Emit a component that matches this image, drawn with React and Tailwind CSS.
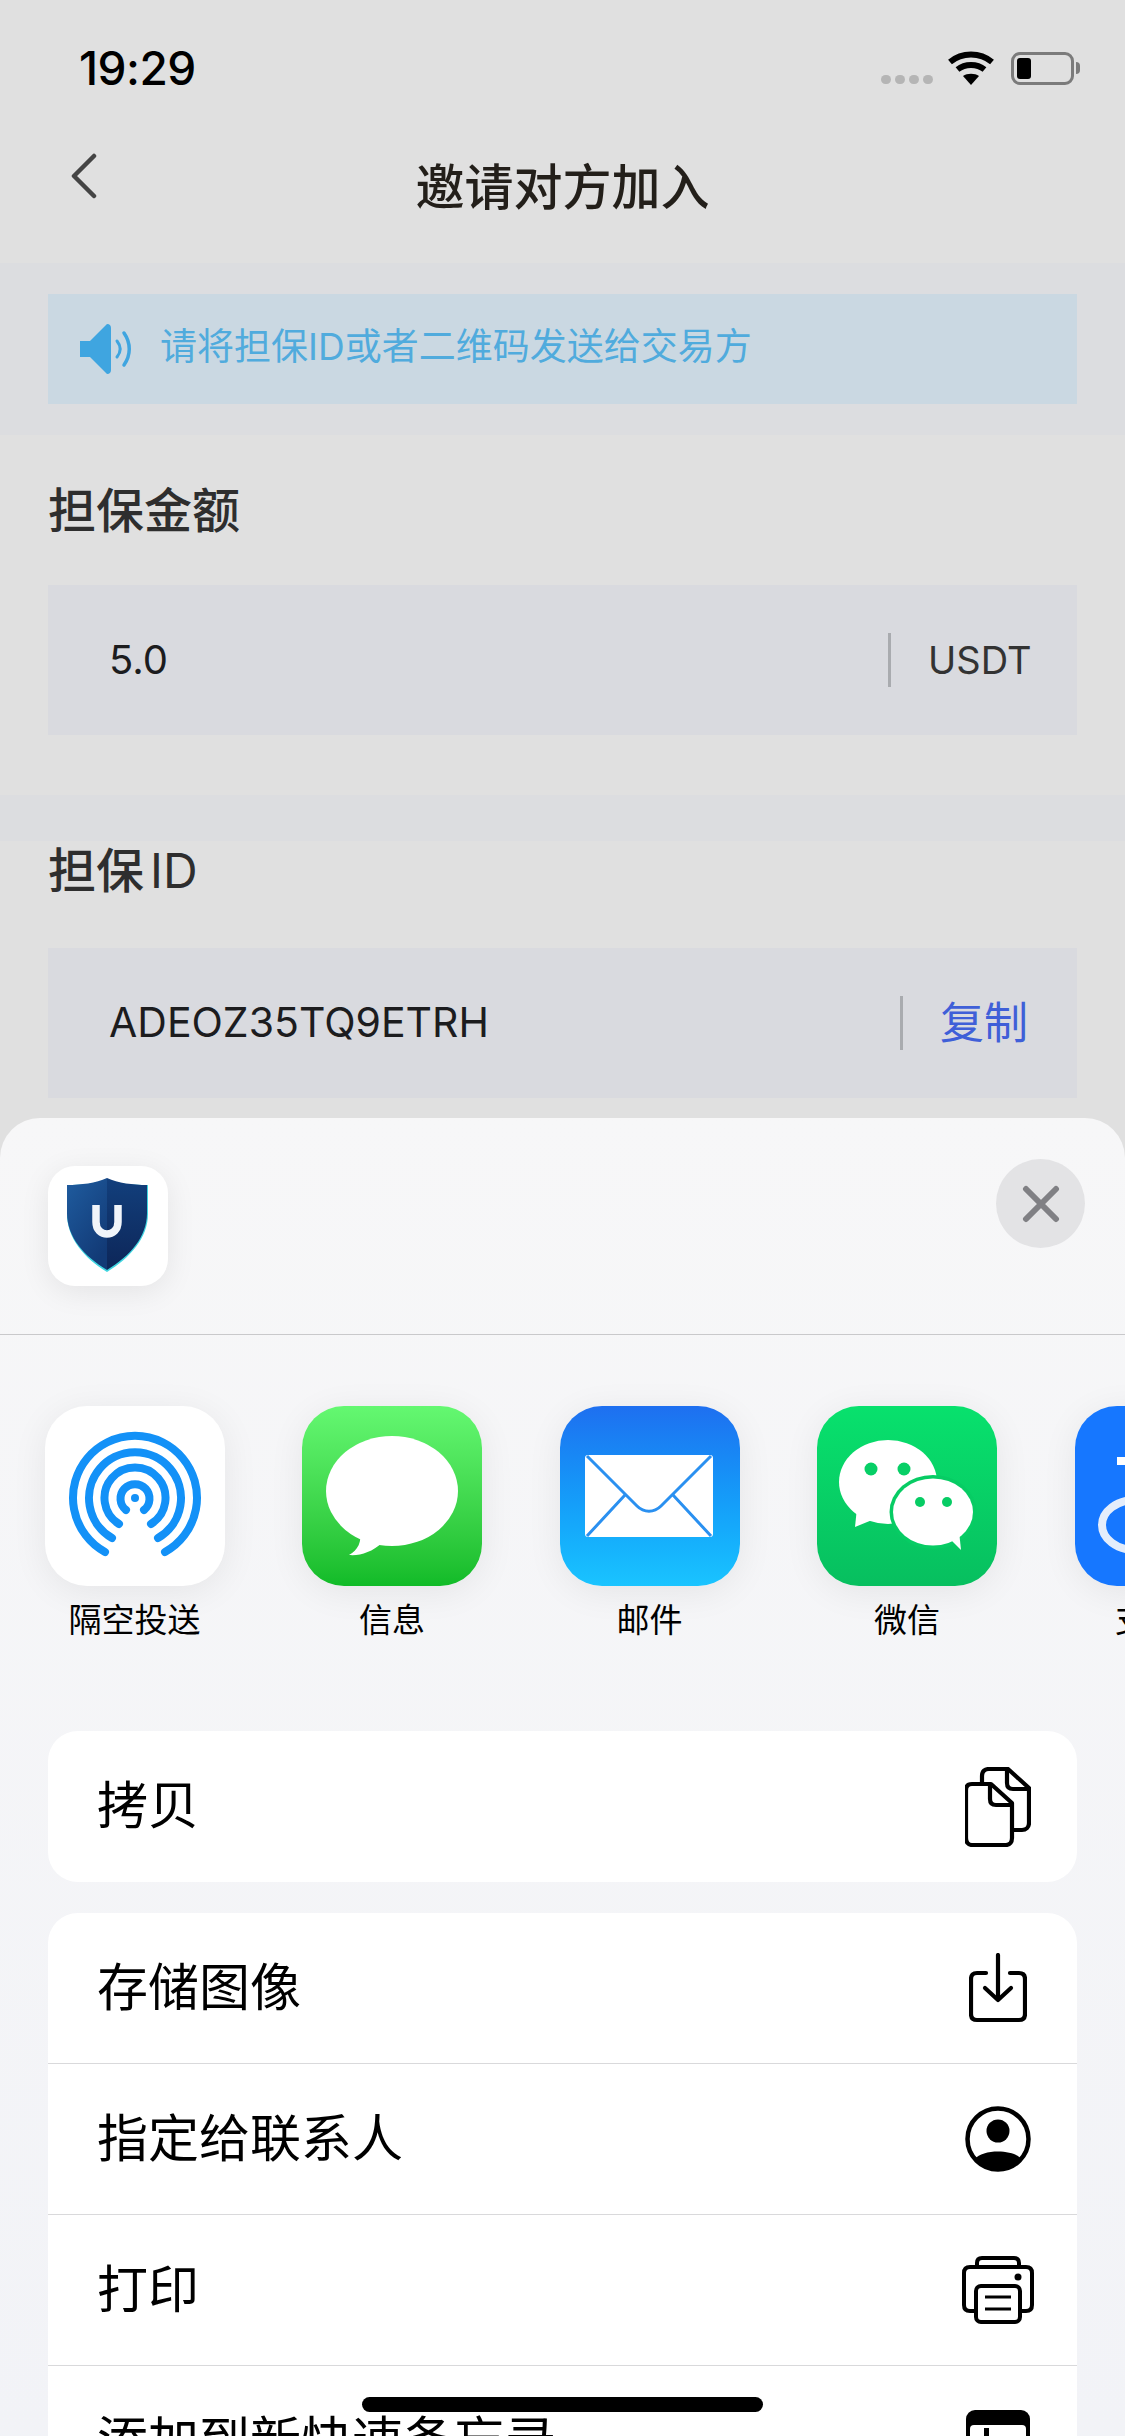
import React from 'react'

const WifiIcon = () => (
  <svg width="48" height="34" viewBox="0 0 48 34" fill="none" stroke="#000" strokeWidth="6">
    <path d="M3 11 C15 1 33 1 45 11" />
    <path d="M10.5 18.5 C18 12.5 30 12.5 37.5 18.5" />
    <path d="M24 34 L16 25 C20 22 28 22 32 25 Z" fill="#000" stroke="none" />
  </svg>
)

const BatteryIcon = () => (
  <div className="flex items-center gap-[2px]">
    <div className="w-[63px] h-[33px] rounded-[9px] border-[3px] border-[#7b7b7b] p-[3px]">
      <div className="w-[14px] h-full rounded-[3px] bg-black" />
    </div>
    <div className="w-[4px] h-[12px] rounded-r-full bg-[#7b7b7b]" />
  </div>
)

const SpeakerIcon = () => (
  <svg width="51" height="50" viewBox="0 0 51 50" fill="none">
    <path d="M0 17 H10 L27 0 C30 0 31 2 31 4 V46 C31 48 30 50 27 50 L10 33 H0 Z" fill="#3fa5e0" />
    <path d="M37 17 C41 22 41 28 37 33" stroke="#3fa5e0" strokeWidth="3" strokeLinecap="round" />
    <path d="M44 9 C51 19 51 31 44 41" stroke="#3fa5e0" strokeWidth="3.5" strokeLinecap="round" />
  </svg>
)

const ShieldLogo = () => (
  <svg width="120" height="120" viewBox="0 0 120 120">
    <defs>
      <linearGradient id="shieldLeft" x1="0" y1="0" x2="0.6" y2="1">
        <stop offset="0" stopColor="#1f5c9f" />
        <stop offset="1" stopColor="#123a76" />
      </linearGradient>
      <linearGradient id="shieldRight" x1="0" y1="0" x2="0" y2="1">
        <stop offset="0" stopColor="#123f7c" />
        <stop offset="1" stopColor="#0d2658" />
      </linearGradient>
    </defs>
    <path d="M59 13 C70 18 86 19 100 19 V48 C100 72 82 92 59 106 C36 92 19 72 19 48 V19 C33 19 48 18 59 13 Z" fill="#3fd5e0" />
    <path d="M59 12 C48 17 33 19 19 19 V47 C19 71 36 90 59 104 Z" fill="url(#shieldLeft)" />
    <path d="M59 12 C70 17 85 19 99 19 V47 C99 71 82 90 59 104 Z" fill="url(#shieldRight)" />
    <path d="M48 39 V56 C48 72 70 72 70 56 V39" fill="none" stroke="#f1f5fa" strokeWidth="7.5" />
  </svg>
)

const AirDropIcon = () => (
  <svg width="180" height="180" viewBox="0 0 180 180" fill="none" stroke="#1391f7" strokeWidth="8" strokeLinecap="round">
    <path d="M60 146 A62 62 0 1 1 120 146" />
    <path d="M67 132 A46 46 0 1 1 113 132" />
    <path d="M74 118 A30.5 30.5 0 1 1 106 118" />
    <path d="M81 104 A14.5 14.5 0 1 1 99 104" />
    <circle cx="90" cy="92" r="4" fill="#1391f7" stroke="none" />
  </svg>
)

const MessageIcon = () => (
  <svg width="180" height="180" viewBox="0 0 180 180">
    <ellipse cx="90" cy="85" rx="66" ry="55" fill="#fff" />
    <path d="M58 124 C60 136 56 144 47 149 C58 150 70 146 80 137 Z" fill="#fff" />
  </svg>
)

const MailIcon = () => (
  <svg width="180" height="180" viewBox="0 0 180 180" fill="none">
    <rect x="25" y="49" width="128" height="82" rx="3" fill="#fff" />
    <path d="M27 50 L77 100 C84 107 94 107 101 100 L151 50" stroke="#2a90f0" strokeWidth="3" />
    <path d="M27 130 L65 89 M151 130 L113 89" stroke="#2a90f0" strokeWidth="3" />
  </svg>
)

const WechatIcon = () => (
  <svg width="180" height="180" viewBox="0 0 180 180">
    <ellipse cx="71" cy="76" rx="49" ry="42" fill="#fff" />
    <path d="M40 102 L38 121 L60 112 Z" fill="#fff" />
    <circle cx="54" cy="63" r="6.5" fill="#07cf66" />
    <circle cx="87" cy="63" r="6.5" fill="#07cf66" />
    <ellipse cx="116" cy="106" rx="43.5" ry="37" fill="#07cc64" />
    <ellipse cx="116" cy="106" rx="40" ry="33.5" fill="#fff" />
    <path d="M130 130 L144 144 L142 125 Z" fill="#fff" />
    <circle cx="103" cy="96" r="5" fill="#07cc64" />
    <circle cx="130" cy="96" r="5" fill="#07cc64" />
  </svg>
)

const AlipayIcon = () => (
  <svg width="180" height="180" viewBox="0 0 180 180" fill="none">
    <rect x="42" y="51" width="130" height="8" fill="#fff" />
    <rect x="80" y="34" width="9" height="40" fill="#fff" />
    <ellipse cx="60" cy="119" rx="33" ry="25" stroke="#e4edfb" strokeWidth="8" />
  </svg>
)

const CopyIcon = () => (
  <svg width="66" height="80" viewBox="0 0 66 80" fill="none" stroke="#000" strokeWidth="4.2" strokeLinejoin="round">
    <path d="M17 15 V9 C17 4 20 2 24 2 H43 L64 21 V56 C64 60 61 63 57 63 H47" />
    <path d="M42 2 V16 C42 20 44 22 48 22 H64" />
    <path d="M7 17 H26 L47 36 V71 C47 75 45 78 41 78 H7 C3 78 1 75 1 71 V23 C1 19 3 17 7 17 Z" fill="#fff" />
    <path d="M25 17 V32 C25 36 27 38 31 38 H47" />
  </svg>
)

const SaveIcon = () => (
  <svg width="58" height="70" viewBox="0 0 58 70" fill="none" stroke="#000" strokeWidth="4.2" strokeLinecap="round" strokeLinejoin="round">
    <path d="M17 20 H8 C4 20 2 22 2 26 V61 C2 65 4 67 8 67 H50 C54 67 56 65 56 61 V26 C56 22 54 20 50 20 H41" />
    <path d="M29 2 V46" />
    <path d="M16 35 L29 47 L42 35" />
  </svg>
)

const ContactIcon = () => (
  <svg width="66" height="66" viewBox="0 0 66 66">
    <circle cx="33" cy="33" r="30.5" fill="none" stroke="#000" strokeWidth="4.5" />
    <circle cx="33" cy="25" r="11.5" fill="#000" />
    <path d="M10 53 C17 43 49 43 56 53 C50 61 42 65 33 65 C24 65 16 61 10 53 Z" fill="#000" />
  </svg>
)

const PrintIcon = () => (
  <svg width="72" height="68" viewBox="0 0 72 68" fill="none" stroke="#000" strokeWidth="4" strokeLinejoin="round">
    <path d="M15 11 V7 C15 3 17 2 20 2 H52 C55 2 57 3 57 7 V11" />
    <path d="M14 55 H8 C4 55 2 53 2 49 V17 C2 13 4 11 8 11 H64 C68 11 70 13 70 17 V49 C70 53 68 55 64 55 H58" />
    <rect x="14" y="30" width="44" height="36" rx="5" />
    <path d="M23 41 H49 M23 53 H49" strokeWidth="3" />
    <circle cx="56" cy="21" r="3.5" fill="#000" stroke="none" />
  </svg>
)

const QuickNoteIcon = () => (
  <svg width="64" height="64" viewBox="0 0 64 64">
    <rect x="0" y="0" width="64" height="64" rx="9" fill="#000" />
    <rect x="4" y="15" width="56" height="45" rx="4" fill="#fff" />
    <rect x="18" y="18" width="5" height="8" fill="#000" />
  </svg>
)

const apps = [
  { name: '隔空投送', bg: 'bg-white', icon: <AirDropIcon /> },
  { name: '信息', bg: 'bg-gradient-to-b from-[#64f871] to-[#10bb28]', icon: <MessageIcon /> },
  { name: '邮件', bg: 'bg-gradient-to-b from-[#1e6ff0] to-[#1ac4ff]', icon: <MailIcon /> },
  { name: '微信', bg: 'bg-gradient-to-b from-[#08e16d] to-[#07bf5f]', icon: <WechatIcon /> },
  { name: '支付宝', bg: 'bg-[#1677ff]', icon: <AlipayIcon /> },
]

const actions = [
  { label: '存储图像', icon: <SaveIcon /> },
  { label: '指定给联系人', icon: <ContactIcon /> },
  { label: '打印', icon: <PrintIcon /> },
  { label: '添加到新快速备忘录', icon: <QuickNoteIcon /> },
]

const ActionRow = ({ label, icon, divider }) => (
  <div className={`flex items-center h-[151px] pl-[49px] ${divider ? 'border-b border-[#d9d9db]' : ''}`}>
    <span className="flex-1 text-[51px] text-black">{label}</span>
    <div className="w-[100px] flex justify-center mr-[29px]">{icon}</div>
  </div>
)

const Field = ({ value, valueClass, children }) => (
  <div className="flex items-center h-[150px] mx-[48px] bg-[#d9dadf]">
    <span className={`flex-1 pl-[61px] text-[#1c1c1e] ${valueClass}`}>{value}</span>
    <div className="w-[3px] h-[54px] bg-[#a9abaf]" />
    {children}
  </div>
)

export default function App() {
  return (
    <div lang="zh-CN" className="relative w-[1125px] h-[2436px] overflow-hidden bg-[#e0e0e0] font-[Inter,'Noto_Sans_CJK_SC',sans-serif]">
      {/* status bar */}
      <div className="flex items-center justify-between h-[136px] pl-[79px] pr-[45px]">
        <span className="text-[46px] font-medium tracking-[-0.5px] text-black">19:29</span>
        <div className="flex items-center">
          <div className="flex gap-[4px] mt-[22px] mr-[14px]">
            <span className="w-[10px] h-[9px] rounded-full bg-[#b5b5b5]" />
            <span className="w-[10px] h-[9px] rounded-full bg-[#b5b5b5]" />
            <span className="w-[10px] h-[9px] rounded-full bg-[#b5b5b5]" />
            <span className="w-[10px] h-[9px] rounded-full bg-[#b5b5b5]" />
          </div>
          <WifiIcon />
          <div className="ml-[16px]"><BatteryIcon /></div>
        </div>
      </div>

      {/* nav */}
      <div className="relative flex justify-center h-[127px] pt-[22px]">
        <svg className="absolute left-[69px] top-[17px]" width="28" height="46" viewBox="0 0 28 46" fill="none">
          <path d="M25 3 L5 23 L25 43" stroke="#444" strokeWidth="4.5" strokeLinecap="round" strokeLinejoin="round" />
        </svg>
        <span className="text-[49px] leading-[60px] font-medium text-[#231f1a]">邀请对方加入</span>
      </div>

      {/* notice */}
      <div className="py-[31px] bg-[#dcdde0]">
        <div className="flex items-center h-[110px] mx-[48px] pl-[32px] bg-[#cad8e2]">
          <SpeakerIcon />
          <span className="ml-[29px] -mt-[5px] text-[37px] text-[#50abdd]">请将担保ID或者二维码发送给交易方</span>
        </div>
      </div>

      {/* amount */}
      <div className="h-[360px] pt-[46px]">
        <div className="px-[48px] h-[104px] text-[48px] leading-[60px] font-medium text-[#2e2e2e]">担保金额</div>
        <Field value="5.0" valueClass="text-[40px]">
          <span className="w-[186px] pl-[37px] text-[38px] text-[#333]">USDT</span>
        </Field>
      </div>

      <div className="h-[46px] bg-[#dcdde0]" />

      {/* guarantee id */}
      <div>
        <div className="flex gap-[6px] px-[48px] h-[107px] text-[48px] leading-[60px] font-medium text-[#2e2e2e]">
          <span>担保</span>
          <span className="font-normal">ID</span>
        </div>
        <Field value="ADEOZ35TQ9ETRH" valueClass="text-[41px]">
          <span className="w-[174px] pl-[37px] text-[44px] text-[#3f5fd8]">复制</span>
        </Field>
      </div>

      {/* share sheet */}
      <div className="absolute left-0 right-0 top-[1118px] bottom-0 rounded-t-[40px] overflow-hidden bg-gradient-to-b from-[#f7f7f8] to-[#f2f3f7]">
        <div className="relative h-[217px] pl-[48px] pt-[48px] border-b border-[#c9c9cb]">
          <div className="w-[120px] h-[120px] rounded-[27px] bg-white shadow-[0_6px_30px_rgba(0,0,0,0.08)]">
            <ShieldLogo />
          </div>
          <div className="absolute right-[40px] top-[41px] flex items-center justify-center w-[89px] h-[89px] rounded-full bg-[#e3e3e5]">
            <svg width="38" height="38" viewBox="0 0 38 38" fill="none">
              <path d="M4 4 L34 34 M34 4 L4 34" stroke="#808084" strokeWidth="6" strokeLinecap="round" />
            </svg>
          </div>
        </div>

        <div className="flex gap-[77.5px] pl-[44.5px] pt-[71px] h-[396px]">
          {apps.map(app => (
            <div key={app.name} className="flex flex-col items-center w-[180px] shrink-0">
              <div className={`w-[180px] h-[180px] rounded-[42px] overflow-hidden shadow-[0_6px_36px_rgba(0,0,0,0.07)] ${app.bg}`}>
                {app.icon}
              </div>
              <span className="mt-[14px] text-[33px] leading-[40px] text-black whitespace-nowrap">{app.name}</span>
            </div>
          ))}
        </div>

        <div className="flex items-center h-[151px] mx-[48px] pl-[49px] rounded-[30px] bg-white">
          <span className="flex-1 text-[51px] text-black">拷贝</span>
          <div className="w-[100px] flex justify-center mr-[29px]"><CopyIcon /></div>
        </div>

        <div className="mx-[48px] mt-[31px] rounded-t-[30px] bg-white">
          {actions.map((a, i) => (
            <ActionRow key={a.label} label={a.label} icon={a.icon} divider={i < actions.length - 1} />
          ))}
        </div>
      </div>

      {/* home indicator */}
      <div className="absolute left-[362px] top-[2397px] w-[401px] h-[15px] rounded-full bg-black" />
    </div>
  )
}
